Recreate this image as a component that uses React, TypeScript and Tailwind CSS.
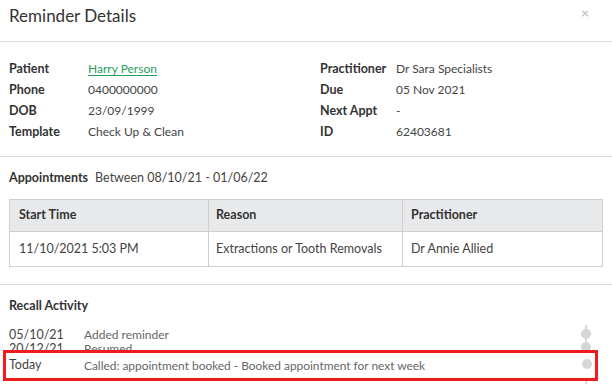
import React from 'react';

interface Field {
  label: string;
  value: string;
  link?: boolean;
}

const leftFields: Field[] = [
  { label: 'Patient', value: 'Harry Person', link: true },
  { label: 'Phone', value: '0400000000' },
  { label: 'DOB', value: '23/09/1999' },
  { label: 'Template', value: 'Check Up & Clean' },
];

const rightFields: Field[] = [
  { label: 'Practitioner', value: 'Dr Sara Specialists' },
  { label: 'Due', value: '05 Nov 2021' },
  { label: 'Next Appt', value: '-' },
  { label: 'ID', value: '62403681' },
];

const FieldList: React.FC<{ fields: Field[]; labelWidth: string }> = ({ fields, labelWidth }) => (
  <div className="flex flex-col">
    {fields.map((f) => (
      <div key={f.label} className="flex h-[21px] items-baseline pt-[3px] leading-[15px]">
        <span className={`${labelWidth} text-[12.5px] font-bold text-[#333]`}>{f.label}</span>
        {f.link ? (
          <span className="text-[#2b9d5c] underline underline-offset-2">{f.value}</span>
        ) : (
          <span className="text-[#444]">{f.value}</span>
        )}
      </div>
    ))}
  </div>
);

export default function App() {
  return (
    <div className="w-[612px] h-[386px] overflow-hidden bg-white text-[12.5px] text-[#444]" style={{ fontFamily: 'Lato, "Open Sans", sans-serif' }}>
      {/* header */}
      <div className="flex h-[42px] items-start justify-between border-b border-[#dcdcdc] pl-[9px] pr-[23px] pt-[6px]">
        <h2 className="text-[17px] leading-[20px] text-[#333]">Reminder Details</h2>
        <span className="-mt-[1px] text-[14px] font-bold leading-[16px] text-[#c4c4c4]">×</span>
      </div>

      {/* details */}
      <div className="flex border-b border-[#dcdcdc] pl-[9px] pt-[16px] pb-[14px] text-[12px]">
        <div className="w-[311px]">
          <FieldList fields={leftFields} labelWidth="w-[79px]" />
        </div>
        <FieldList fields={rightFields} labelWidth="w-[76px]" />
      </div>

      {/* appointments */}
      <div className="border-b border-[#dcdcdc] px-[9px] pt-[13px] pb-[17px]">
        <div className="flex h-[16px] items-center">
          <span className="font-bold text-[#333]">Appointments</span>
          <span className="ml-[7px] text-[#444]">Between 08/10/21 - 01/06/22</span>
        </div>
        <table className="mt-[13px] w-[594px] border-collapse border border-[#cfcfcf]">
          <thead>
            <tr className="h-[32px] bg-[#e8e9eb] text-left">
              <th className="w-[199px] border border-[#cfcfcf] pl-[9px] font-bold text-[#333]">Start Time</th>
              <th className="w-[194px] border border-[#cfcfcf] pl-[7px] font-bold text-[#333]">Reason</th>
              <th className="border border-[#cfcfcf] pl-[8px] font-bold text-[#333]">Practitioner</th>
            </tr>
          </thead>
          <tbody>
            <tr className="h-[35px]">
              <td className="border border-[#cfcfcf] pl-[9px]">11/10/2021 5:03 PM</td>
              <td className="border border-[#cfcfcf] pl-[7px]">Extractions or Tooth Removals</td>
              <td className="border border-[#cfcfcf] pl-[8px]">Dr Annie Allied</td>
            </tr>
          </tbody>
        </table>
      </div>

      {/* recall activity */}
      <div className="relative px-[9px] pt-[13px]">
        <div className="flex h-[16px] items-center font-bold text-[#333]">Recall Activity</div>
        <div className="mt-[14px] flex flex-col text-[12px] text-[#666]">
          <div className="flex h-[14px] items-center">
            <span className="w-[75px] text-[12.5px] text-[#444]">05/10/21</span>
            <span>Added reminder</span>
          </div>
          <div className="flex h-[14px] items-center">
            <span className="w-[75px] text-[12.5px] text-[#444]">20/12/21</span>
            <span>Resumed</span>
          </div>
        </div>

        {/* timeline */}
        <div className="absolute left-[585px] top-[40px] h-[70px] border-l-2 border-dashed border-[#dadada]" />
        <div className="absolute left-[581px] top-[44px] h-[10px] w-[10px] rounded-full bg-[#d6d6d6]" />
        <div className="absolute left-[581px] top-[57px] h-[10px] w-[10px] rounded-full bg-[#d6d6d6]" />

        {/* highlighted row */}
        <div className="absolute left-[3px] top-[65px] flex h-[31px] w-[595px] items-center border-[3px] border-[#ee1c1c] bg-white pl-[3px] text-[11.9px] text-[#666]">
          <span className="w-[75px] text-[12.5px] text-[#444]">Today</span>
          <span>Called: appointment booked - Booked appointment for next week</span>
          <div className="absolute left-[576px] top-[6px] h-[10px] w-[10px] rounded-full bg-[#d6d6d6]" />
        </div>
      </div>
    </div>
  );
}
